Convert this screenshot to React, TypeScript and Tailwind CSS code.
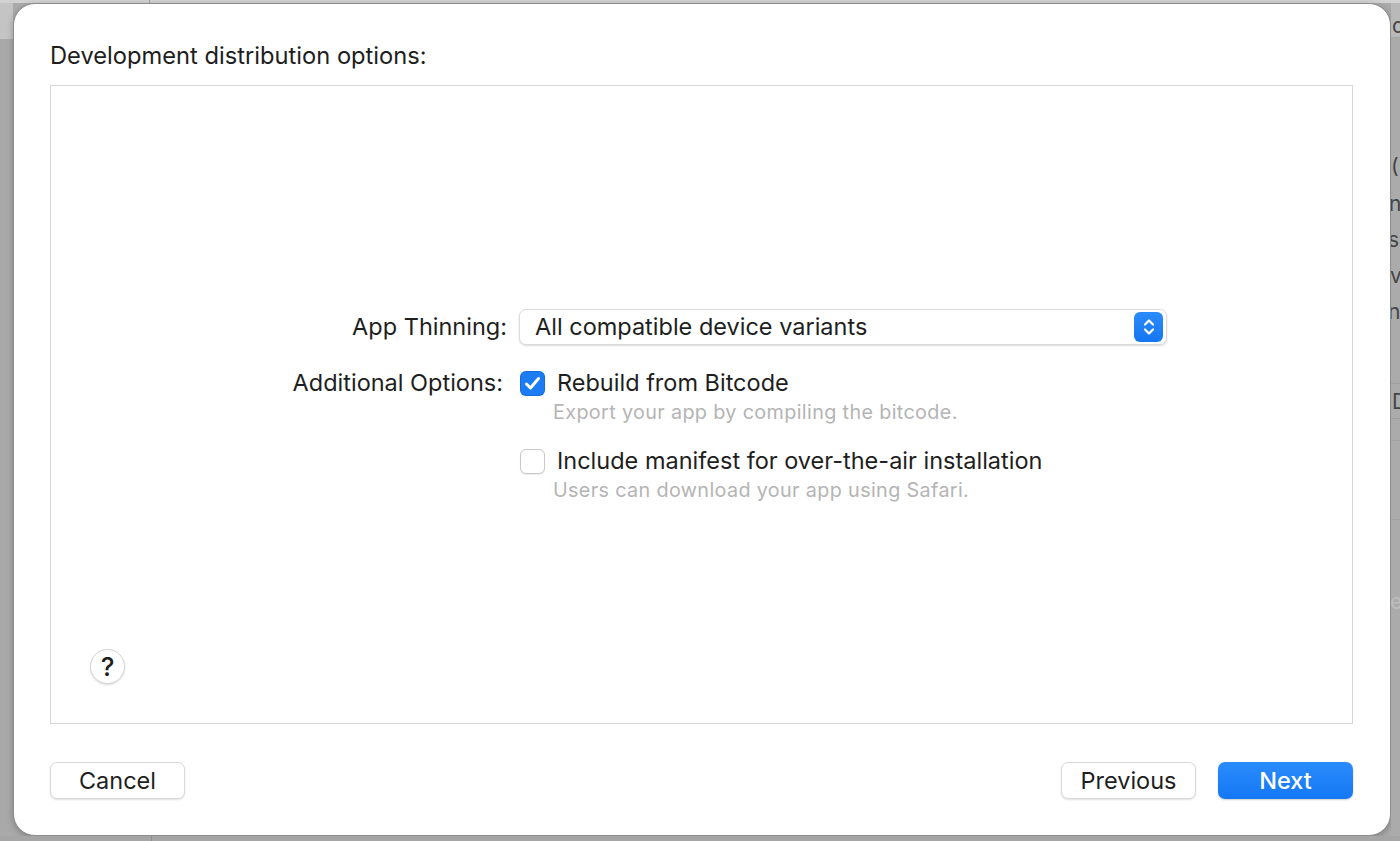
import React from 'react';

const font = { fontFamily: 'Inter, "Noto Sans", sans-serif' };

function Checkbox({ checked }: { checked: boolean }) {
  if (checked) {
    return (
      <div className="w-[25px] h-[25px] rounded-[6px] bg-[#1b7cf4] flex items-center justify-center shrink-0 shadow-[inset_0_0_0_1px_rgba(0,60,160,0.25)]">
        <svg width="17" height="15" viewBox="0 0 17 15" fill="none">
          <path d="M2.5 8 L6.5 12 L14.5 2.5" stroke="white" strokeWidth="3" strokeLinecap="round" strokeLinejoin="round" />
        </svg>
      </div>
    );
  }
  return (
    <div className="w-[25px] h-[25px] rounded-[6px] bg-white border border-[#c9c9c9] shadow-[0_1px_1px_rgba(0,0,0,0.08)] shrink-0" />
  );
}

function Option({ checked, label, hint }: { checked: boolean; label: string; hint: string }) {
  return (
    <div className="flex flex-col">
      <div className="flex items-center h-[28px] pl-[1px] gap-[12px]">
        <Checkbox checked={checked} />
        <span className="text-[23.5px] text-[#1e1e1e] leading-none">{label}</span>
      </div>
      <div className="pl-[34px] mt-[5px] h-[22px] flex items-center text-[19.8px] tracking-[0.35px] text-[#b4b4b4] leading-none">
        {hint}
      </div>
    </div>
  );
}

function Button({ children, primary }: { children: React.ReactNode; primary?: boolean }) {
  if (primary) {
    return (
      <button className="w-[135px] h-[37px] rounded-[7px] bg-gradient-to-b from-[#2a8cfc] to-[#1477f4] text-white text-[23.5px] font-medium shadow-[0_1px_2px_rgba(0,0,0,0.2)]">
        {children}
      </button>
    );
  }
  return (
    <button className="w-[135px] h-[37px] rounded-[7px] bg-white border border-[#d9d9d9] text-[#1e1e1e] text-[23.5px] shadow-[0_1px_2px_rgba(0,0,0,0.12)]">
      {children}
    </button>
  );
}

export default function App() {
  return (
    <div className="w-[1400px] h-[841px] bg-[#aaaaaa] flex flex-col overflow-hidden" style={font}>
      {/* strip above the sheet */}
      <div className="h-[3px] bg-[#d2d2d2] flex shrink-0">
        <div className="w-[150px] border-r border-[#a0a0a0]" />
      </div>
      <div className="flex flex-1">
        <div className="w-[13px] flex flex-col shrink-0">
          <div className="h-[36px] bg-[#c4c4c4]" />
          <div className="flex-1 bg-[#a9a9a9]" />
        </div>

        {/* sheet */}
        <div className="w-[1378px] h-[833px] bg-white rounded-[22px] border border-[#8c8c8c] shadow-[0_2px_6px_rgba(0,0,0,0.25)] flex flex-col pl-[36px] pr-[37px] shrink-0">
          <div className="h-[81px] flex items-center pt-[35px] pb-[12px]">
            <span className="text-[23.7px] text-[#1e1e1e] leading-none">Development distribution options:</span>
          </div>

          <div className="h-[639px] border border-[#d6d6d6] flex flex-col pt-[223px] pb-[39px] pl-[39px]">
            <div className="grid grid-cols-[417px_648px] gap-x-[12px]">
              <div className="h-[36px] flex items-center justify-end text-[23.5px] text-[#1e1e1e]">App Thinning:</div>
              <div className="h-[36px] rounded-[7px] bg-white border border-[#dcdcdc] shadow-[0_1px_2px_rgba(0,0,0,0.15)] flex items-center justify-between pl-[15px] pr-[3px]">
                <span className="text-[23.5px] text-[#1e1e1e]">All compatible device variants</span>
                <div className="w-[29px] h-[30px] rounded-[6px] bg-gradient-to-b from-[#2a8bfb] to-[#1676f2] flex items-center justify-center">
                  <svg width="14" height="20" viewBox="0 0 14 20" fill="none">
                    <path d="M3 7.5 L7 3.5 L11 7.5" stroke="white" strokeWidth="2.2" strokeLinecap="round" strokeLinejoin="round" />
                    <path d="M3 12.5 L7 16.5 L11 12.5" stroke="white" strokeWidth="2.2" strokeLinecap="round" strokeLinejoin="round" />
                  </svg>
                </div>
              </div>

              <div className="mt-[24px] h-[28px] flex items-center justify-end pr-[4px] text-[23.5px] text-[#1e1e1e]">
                Additional Options:
              </div>
              <div className="mt-[24px] flex flex-col gap-[23px]">
                <Option checked label="Rebuild from Bitcode" hint="Export your app by compiling the bitcode." />
                <Option checked={false} label="Include manifest for over-the-air installation" hint="Users can download your app using Safari." />
              </div>
            </div>

            <div className="flex-1" />
            <div className="w-[35px] h-[35px] rounded-full bg-white border border-[#d6d6d6] shadow-[0_1px_2px_rgba(0,0,0,0.15)] flex items-center justify-center text-[26px] font-medium text-[#1e1e1e] leading-none">
              ?
            </div>
          </div>

          <div className="flex items-start justify-between pt-[38px]">
            <Button>Cancel</Button>
            <div className="flex gap-[22px]">
              <Button>Previous</Button>
              <Button primary>Next</Button>
            </div>
          </div>
        </div>

        {/* window behind, peeking out on the right */}
        <div className="flex-1 relative overflow-hidden bg-[#ababab] text-[21px] text-[#444444] leading-none">
          <div className="h-[35px] bg-[#b9b9b9] border-b border-[#a3a3a3]" />
          <span className="absolute left-[1px] top-[12px]">d</span>
          <span className="absolute left-[0px] top-[152px]">(</span>
          <span className="absolute left-[-2px] top-[190px]">n</span>
          <span className="absolute left-[-3px] top-[226px]">s</span>
          <span className="absolute left-[-1px] top-[262px]">v</span>
          <span className="absolute left-[-3px] top-[298px]">ne</span>
          <div className="absolute left-0 right-0 top-[380px] h-[36px] border-y border-[#9f9f9f]" />
          <span className="absolute left-[1px] top-[388px]">D</span>
          <div className="absolute left-0 right-0 top-[437px] border-t border-[#a2a2a2]" />
          <div className="absolute left-0 right-0 top-[516px] border-t border-[#a2a2a2]" />
          <span className="absolute left-[-1px] top-[588px] text-[#bdbdbd]">e</span>
        </div>
      </div>
      <div className="h-[5px] bg-[#a5a5a5] flex shrink-0">
        <div className="w-[152px] border-r border-[#8f8f8f]" />
      </div>
    </div>
  );
}
